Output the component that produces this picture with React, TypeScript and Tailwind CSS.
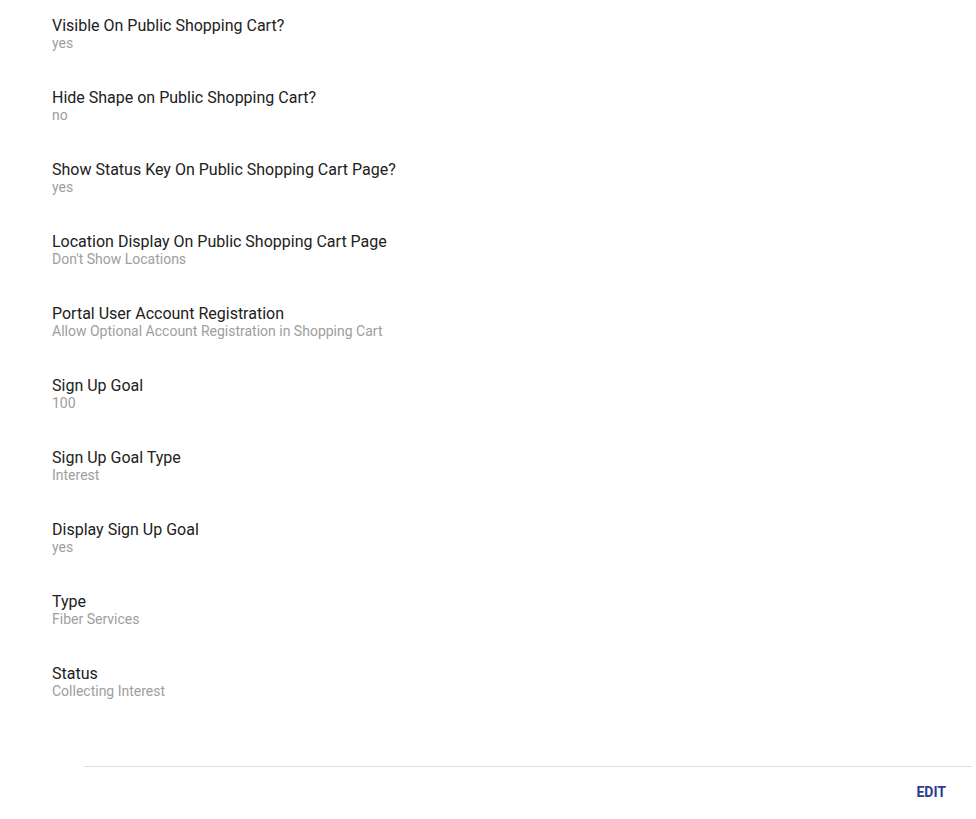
import React from "react";

interface Field {
  label: string;
  value: string;
}

const fields: Field[] = [
  { label: "Visible On Public Shopping Cart?", value: "yes" },
  { label: "Hide Shape on Public Shopping Cart?", value: "no" },
  { label: "Show Status Key On Public Shopping Cart Page?", value: "yes" },
  { label: "Location Display On Public Shopping Cart Page", value: "Don't Show Locations" },
  { label: "Portal User Account Registration", value: "Allow Optional Account Registration in Shopping Cart" },
  { label: "Sign Up Goal", value: "100" },
  { label: "Sign Up Goal Type", value: "Interest" },
  { label: "Display Sign Up Goal", value: "yes" },
  { label: "Type", value: "Fiber Services" },
  { label: "Status", value: "Collecting Interest" },
];

const App: React.FC = () => {
  return (
    <div className="w-[976px] h-[819px] bg-white font-['Roboto',sans-serif] overflow-hidden">
      <div className="pl-[52px] pt-[16px] flex flex-col gap-[38px]">
        {fields.map((field) => (
          <div key={field.label} className="flex flex-col">
            <span className="text-base leading-5 text-[#212121]">{field.label}</span>
            <span className="text-sm leading-[14px] text-[#9e9e9e]">{field.value}</span>
          </div>
        ))}
      </div>

      <div className="mt-[68px] ml-[84px] mr-[4px] border-t border-[#e0e0e0]" />

      <div className="flex justify-end pr-[22px] pt-[7px]">
        <button
          type="button"
          className="h-9 px-2 text-sm font-bold text-[#2a3c92] uppercase"
        >
          Edit
        </button>
      </div>
    </div>
  );
};

export default App;
